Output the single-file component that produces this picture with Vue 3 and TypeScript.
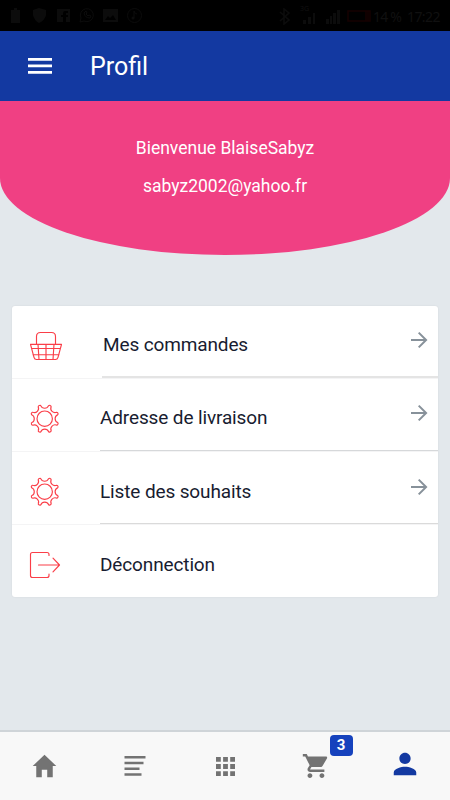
<script setup lang="ts">
interface MenuItem {
  label: string
  icon: 'basket' | 'gear' | 'logout'
  arrow: boolean
  kind: string
}

const items: MenuItem[] = [
  { label: 'Mes commandes', icon: 'basket', arrow: true, kind: 'orders' },
  { label: 'Adresse de livraison', icon: 'gear', arrow: true, kind: 'address' },
  { label: 'Liste des souhaits', icon: 'gear', arrow: true, kind: 'wishes' },
  { label: 'Déconnection', icon: 'logout', arrow: false, kind: 'logout' },
]

// Eight-toothed gear outline centred on 16.7,16.7
function gearOutline(): string {
  const at = (deg: number, r: number): string => {
    const a = (deg * Math.PI) / 180
    return `${(16.7 + r * Math.cos(a)).toFixed(2)} ${(16.7 + r * Math.sin(a)).toFixed(2)}`
  }
  let d = ''
  for (let k = 0; k < 8; k++) {
    const c = 22.5 + 45 * k
    d += `${k === 0 ? 'M' : 'L'}${at(c - 6, 13.6)}Q${at(c - 3, 14.6)} ${at(c, 14.3)}Q${at(c + 6, 14.2)} ${at(c + 6, 13.4)}`
    d += `C${at(c + 8, 9.9)} ${at(c + 37, 9.9)} ${at(c + 39, 13.6)}`
  }
  return d + 'Z'
}
const gearPath = gearOutline()
</script>

<template>
  <div class="screen">
    <div class="status">
      <svg class="notifs" width="135" height="16" viewBox="0 0 135 16">
        <path d="M1 2h3V0h3v2h3v13H1z" />
        <path d="M23 2l6-2 7 2v5q-1 5-7 8q-5-3-6-8z" />
        <path d="M47 1h13v13h-4V9h2V7h-2V5h2V3h-3q-2 0-2 2v2h-2v2h2v5h-6z" />
        <path class="line" d="M70 14l1-4a6.500 6.500 0 1 1 3 3zM74 5q1 5 6 5l1-2-2-1-1 1-2-2 1-1-1-2z" />
        <path d="M93 1h15v13H93zM95 12h11l-3-5-3 3-2-2z" fill-rule="evenodd" />
        <circle class="line" cx="124.500" cy="7.500" r="7" />
        <path class="line" d="M124 10V3q1 3 3 3" />
        <circle cx="123" cy="10" r="1.500" />
      </svg>
      <div class="system">
        <svg width="95" height="17" viewBox="0 0 95 17">
          <path class="line bold" d="M2 4l9 8-5 4V1l5 4-9 8" />
          <path d="M25 12h3v4h-3zM30 9h3v7h-3zM35 5h2v11h-2zM48 11h3v5h-3zM52 8h2v8h-2zM55 5h3v11h-3zM59 2h3v14h-3z" />
          <path class="battery" d="M70 3h20v10H70zM88 3h4v10h-4z" />
        </svg>
        <span class="network">3G</span>
        <span class="percent">14 %</span>
        <span class="clock">17:22</span>
      </div>
    </div>

    <header class="header">
      <svg class="burger" width="24" height="16" viewBox="0 0 24 16">
        <path d="M0 0h24v2.700H0zM0 6.500h24v2.700H0zM0 13h24v2.700H0z" />
      </svg>
      <h1 class="title">Profil</h1>
    </header>

    <main class="content">
      <section class="hero">
        <p class="welcome">Bienvenue BlaiseSabyz</p>
        <p class="email">sabyz2002@yahoo.fr</p>
      </section>

      <ul class="card">
        <li v-for="item in items" :key="item.kind" class="row" :class="item.kind">
          <svg v-if="item.icon === 'basket'" class="icon" width="34" height="34" viewBox="0 0 34 34">
            <path d="M8.500 15.300V7.500q0-4 4-4h11q4 0 4 4v7.800M2.500 15.300h31l-3.500 13q-.6 2.200-2.500 2.200h-19q-1.900 0-2.500-2.200zM3.700 19.500h28.600M5 25.700h26M10 15.300l1 15.200M18 15.300v15.200M26 15.300l-1 15.200" />
          </svg>
          <svg v-else-if="item.icon === 'gear'" class="icon" width="34" height="34" viewBox="0 0 34 34">
            <path :d="gearPath" />
            <circle cx="16.700" cy="16.700" r="7.700" />
          </svg>
          <svg v-else class="icon" width="34" height="34" viewBox="0 0 34 34">
            <path d="M21 7.500V6.500q0-2-2-2H4.500q-2 0-2 2v21q0 2 2 2H19q2 0 2-2V26M10.500 17h21M25 10.200l6.500 6.800-6.500 6.800" />
          </svg>
          <div class="body">
            <span class="label">{{ item.label }}</span>
            <svg v-if="item.arrow" class="arrow" width="18" height="18" viewBox="0 0 18 18">
              <path d="M1 9h15M8.700 1.600L16.100 9l-7.400 7.400" />
            </svg>
          </div>
        </li>
      </ul>
    </main>

    <nav class="tabs">
      <a class="tab">
        <svg width="29" height="30" viewBox="0 0 512 512" preserveAspectRatio="none">
          <path d="M208 448V320h96v128h97.600V256H464L256 64 48 256h62.400v192z" />
        </svg>
      </a>
      <a class="tab">
        <svg width="22" height="20" viewBox="0 0 22 20">
          <path d="M.5 0h21v2.500H.5zM.5 5.800h19v2.500H.5zM.5 11.600h15v2.500H.5zM.5 17.300h17v2.500H.5z" />
        </svg>
      </a>
      <a class="tab">
        <svg width="19" height="19" viewBox="0 0 19 19">
          <path d="M0 0h4.800v4.800H0zM7.100 0h4.800v4.800H7.100zM14.200 0H19v4.800h-4.800zM0 7.100h4.800v4.800H0zM7.100 7.100h4.800v4.800H7.100zM14.200 7.100H19v4.800h-4.800zM0 14.200h4.800V19H0zM7.100 14.200h4.800V19H7.100zM14.200 14.200H19V19h-4.800z" />
        </svg>
      </a>
      <a class="tab">
        <svg width="30" height="30" viewBox="0 0 512 512">
          <path d="M169.600 377.600c-22.882 0-41.600 18.718-41.600 41.601 0 22.882 18.718 41.600 41.600 41.600s41.601-18.718 41.601-41.600c-.001-22.884-18.720-41.601-41.601-41.601zM48 51.200v41.600h41.600l74.883 151.682-31.308 50.954c-3.118 5.200-5.200 12.482-5.200 19.765 0 27.850 19.025 41.600 44.825 41.600H416v-40H177.893c-3.118 0-5.200-2.082-5.200-5.200 0-1.036 2.207-5.200 2.207-5.200l20.782-32.800h154.954c15.601 0 29.128-8.317 36.400-21.836l74.882-128.800c1.237-2.461 2.082-6.246 2.082-10.400 0-11.446-9.364-19.765-20.800-19.765H135.364L115.600 51.200H48zm326.399 326.400c-22.882 0-41.600 18.718-41.600 41.601 0 22.882 18.718 41.600 41.600 41.600S416 442.082 416 419.200c0-22.883-18.719-41.600-41.601-41.600z" />
        </svg>
        <span class="badge">3</span>
      </a>
      <a class="tab active">
        <svg width="30" height="30" viewBox="0 0 512 512">
          <path d="M256 256c52.805 0 96-43.201 96-96s-43.195-96-96-96-96 43.201-96 96 43.195 96 96 96zm0 48c-63.598 0-192 32.402-192 96v48h384v-48c0-63.598-128.402-96-192-96z" />
        </svg>
      </a>
    </nav>
  </div>
</template>

<style>
body {
  margin: 0;
}
</style>

<style scoped>
.screen {
  display: flex;
  flex-direction: column;
  width: 450px;
  height: 800px;
  overflow: hidden;
  background: #e3e8ec;
  font-family: Roboto, 'Liberation Sans', sans-serif;
}
svg {
  display: block;
  flex: none;
}
.status {
  display: flex;
  justify-content: space-between;
  box-sizing: border-box;
  height: 31px;
  padding: 8px 10px 0;
  background: #000;
  color: #101010;
  fill: #0c0c0c;
  flex: none;
}
.status .line {
  fill: none;
  stroke: #0c0c0c;
}
.status .bold {
  stroke-width: 1.6;
}
.status .battery {
  fill: none;
  stroke: #160000;
  stroke-width: 1.5;
}
.system {
  display: flex;
  position: relative;
  font: 14px/17px 'Noto Sans', sans-serif;
}
.network {
  position: absolute;
  left: 22px;
  top: -5px;
  font-size: 7px;
  line-height: 12px;
}
.percent {
  width: 34px;
  letter-spacing: -0.8px;
}
.clock {
  width: 33px;
  letter-spacing: -0.6px;
}
.header {
  display: flex;
  align-items: center;
  height: 70px;
  padding-left: 28px;
  background: #1339a1;
  flex: none;
}
.burger {
  fill: #fff;
}
.title {
  margin: 2px 0 0 38px;
  color: #fff;
  font-size: 25px;
  font-weight: 400;
  line-height: 30px;
}
.content {
  flex: 1;
}
.hero {
  box-sizing: border-box;
  height: 154px;
  padding-top: 35px;
  border-radius: 0 0 50% 50%;
  background: #f04083;
  color: #fff;
  font-size: 17.5px;
  line-height: 24px;
  text-align: center;
}
.hero p {
  margin: 0 0 14px;
}
.card {
  margin: 51px 12px 0;
  padding: 0;
  list-style: none;
  border-radius: 3px;
  background: #fff;
  box-shadow: 0 0 2px rgba(0, 0, 0, 0.08);
}
.row {
  display: flex;
  align-items: center;
  box-sizing: border-box;
  height: 73px;
  padding-left: 16px;
  border-bottom: 1px solid #f4f4f5;
}
.row.logout {
  height: 72px;
  border-bottom: 0;
}
.icon {
  margin-top: 8px;
  fill: none;
  stroke: #fa3e48;
  stroke-width: 1.15;
  stroke-linecap: round;
  stroke-linejoin: round;
}
.body {
  display: flex;
  align-items: center;
  justify-content: space-between;
  box-sizing: border-box;
  flex: 1;
  height: 100%;
  margin-left: 38px;
  padding-right: 10px;
  border-bottom: 1px solid #d6d8da;
}
.orders .body {
  margin-left: 40px;
  border-bottom: 2px solid #e4e4e4;
}
.wishes .body {
  border-bottom-color: #dadada;
}
.logout .body {
  border-bottom: 0;
}
.label {
  padding-top: 6px;
  color: #181c30;
  font-size: 19px;
  line-height: 24px;
  letter-spacing: -0.13px;
}
.orders .label {
  padding-top: 8px;
  padding-left: 1px;
}
.wishes .label,
.logout .label {
  padding-top: 8px;
}
.arrow {
  margin-top: -3px;
  fill: none;
  stroke: #87919a;
  stroke-width: 2;
}
.wishes .arrow {
  margin-top: -1px;
}
.tabs {
  display: flex;
  box-sizing: border-box;
  height: 70px;
  border-top: 2px solid #cfd4d8;
  background: #f8f8f8;
  flex: none;
}
.tab {
  display: flex;
  position: relative;
  flex: 1;
  align-items: center;
  justify-content: center;
  padding: 0 1px 0 0;
  fill: #737373;
}
.tab.active {
  padding: 0 0 4px;
  fill: #1339a1;
}
.badge {
  position: absolute;
  left: 59px;
  top: 3px;
  width: 23px;
  height: 21px;
  border-radius: 4px;
  background: #1642bd;
  color: #fff;
  font-size: 15px;
  font-weight: 700;
  line-height: 20px;
  text-align: center;
}
</style>
